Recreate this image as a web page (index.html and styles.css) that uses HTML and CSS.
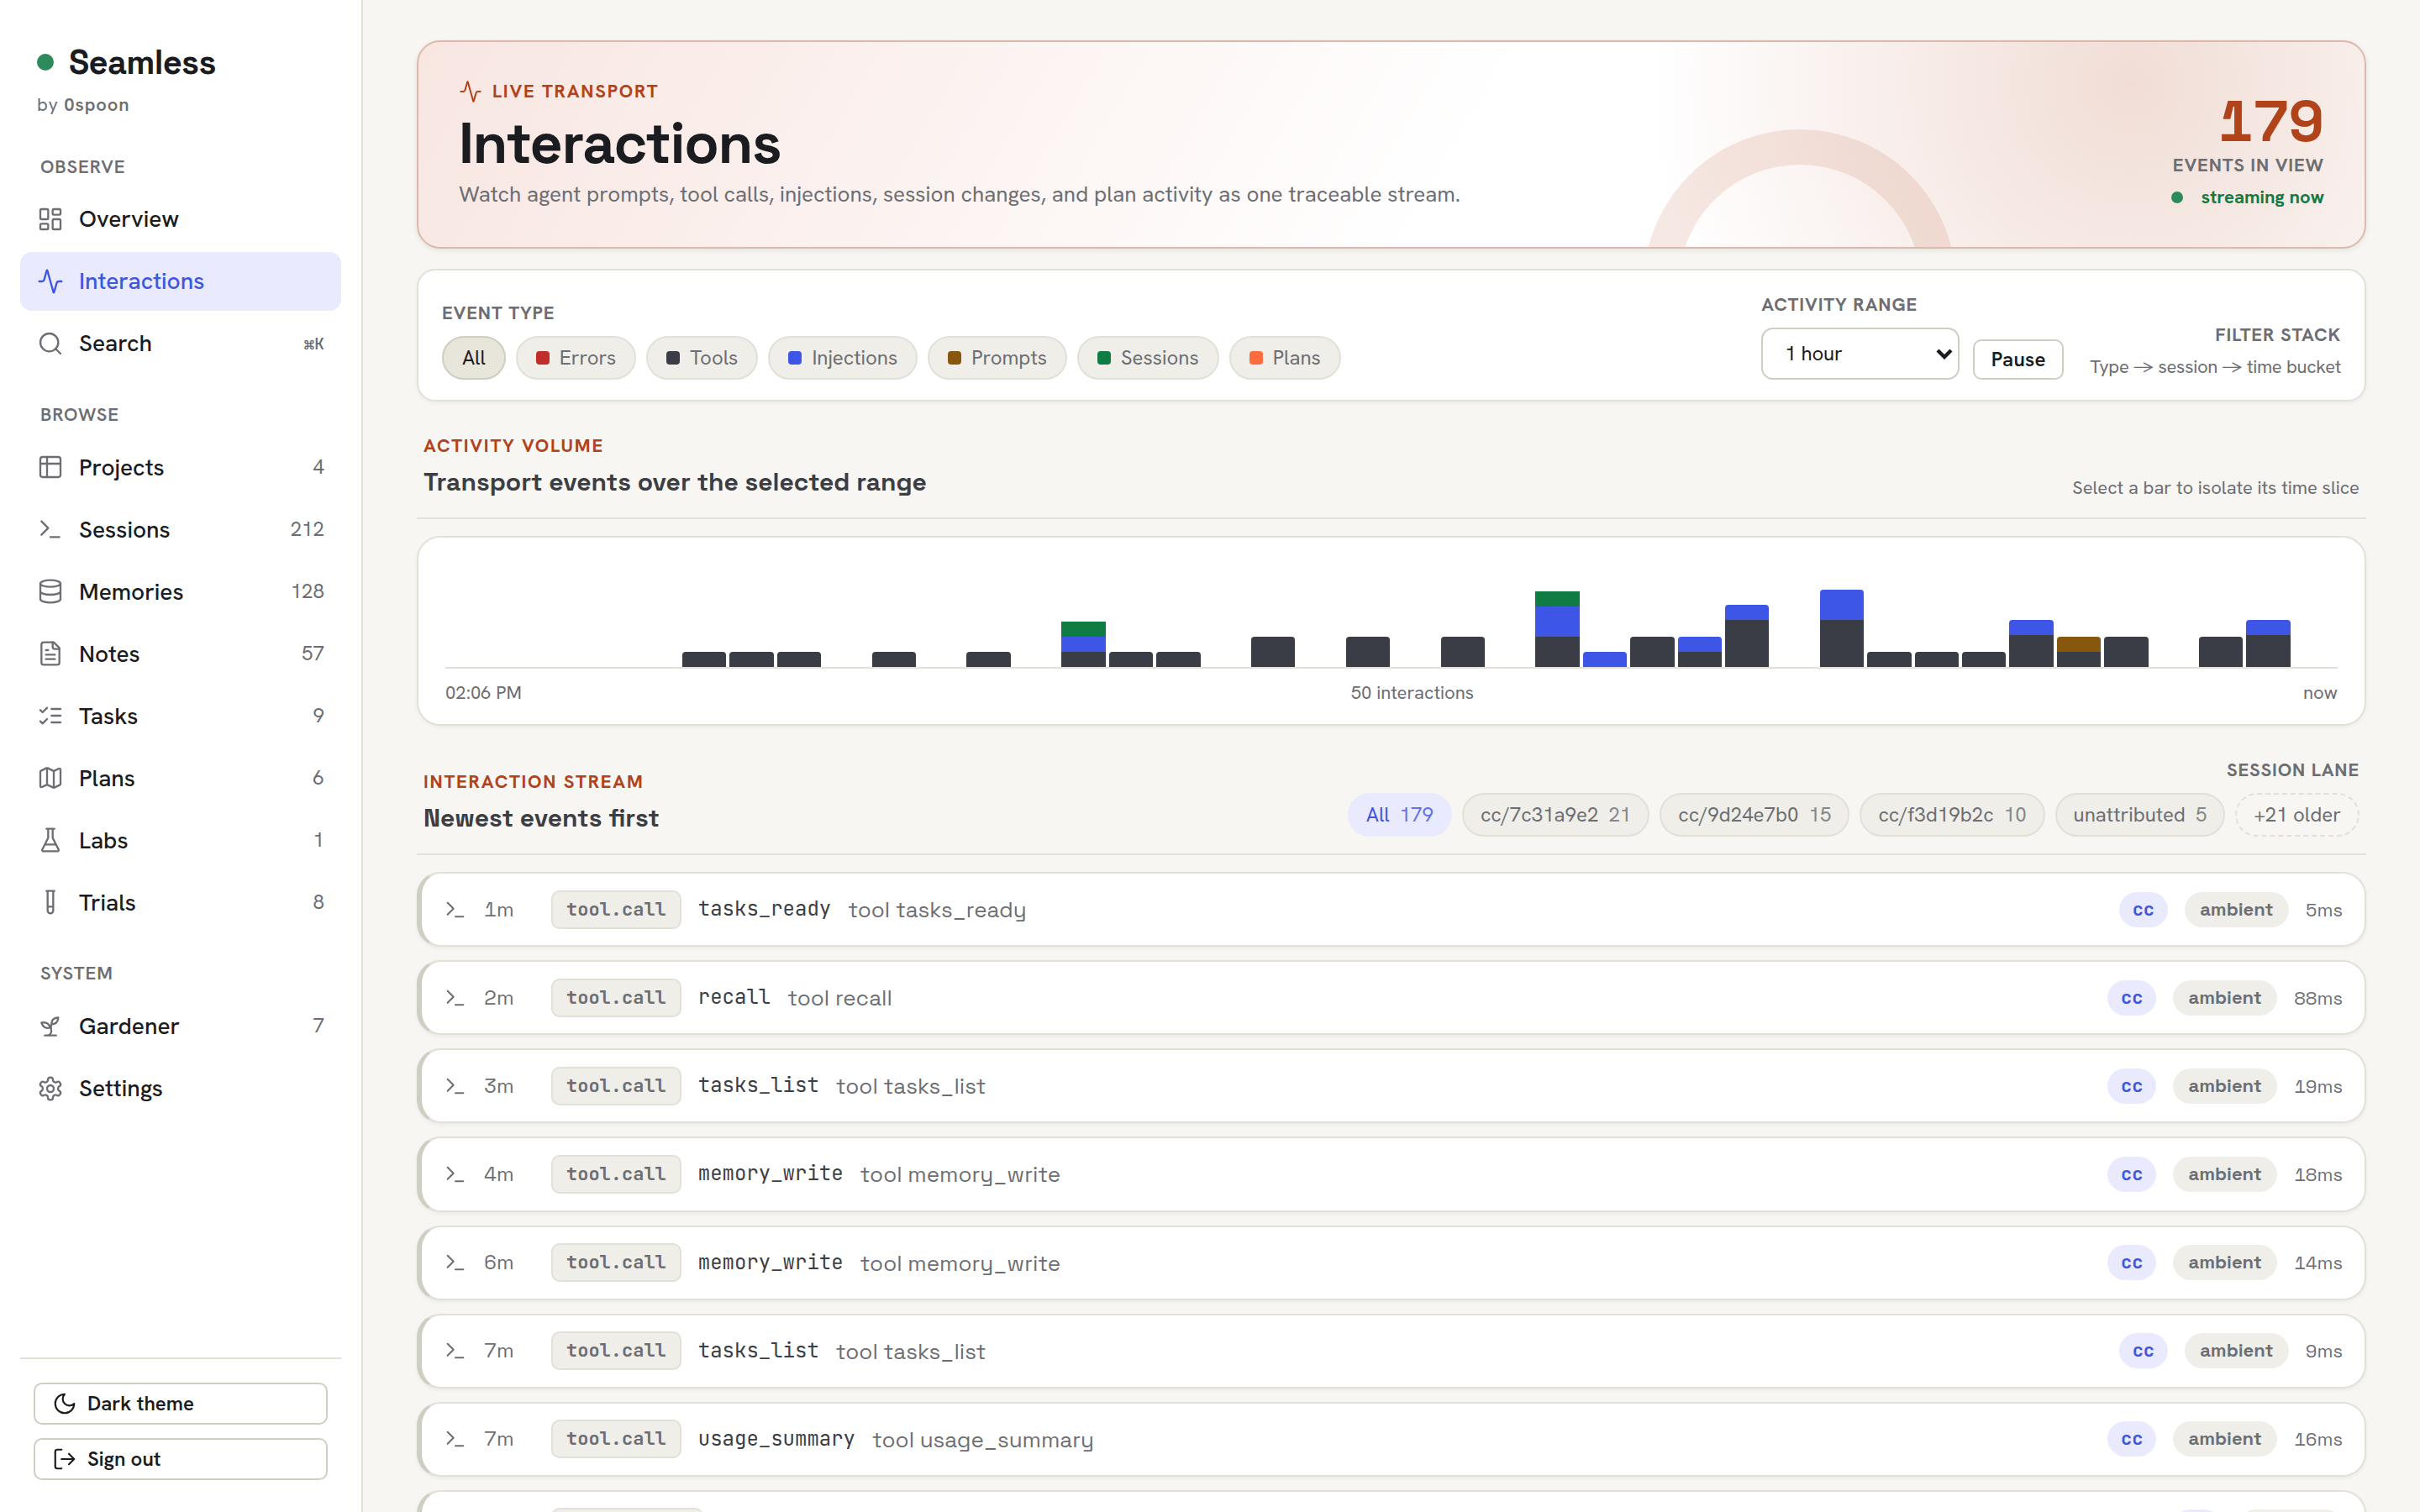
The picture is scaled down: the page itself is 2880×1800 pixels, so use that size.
FILE: index.html
```html
<!DOCTYPE html>
<html lang="en">
<head>
<meta charset="utf-8">
<title>Seamless · Interactions</title>
<link rel="stylesheet" href="styles.css">
</head>
<body>
<svg class="sprite" aria-hidden="true">
  <symbol id="i-grid" viewBox="0 0 24 24"><rect x="3" y="3" width="7" height="9" rx="1"/><rect x="14" y="3" width="7" height="5" rx="1"/><rect x="14" y="12" width="7" height="9" rx="1"/><rect x="3" y="16" width="7" height="5" rx="1"/></symbol>
  <symbol id="i-activity" viewBox="0 0 24 24"><path d="M22 12h-2.48a2 2 0 0 0-1.93 1.46l-2.35 8.36a.25.25 0 0 1-.48 0L9.24 2.18a.25.25 0 0 0-.48 0l-2.35 8.36A2 2 0 0 1 4.49 12H2"/></symbol>
  <symbol id="i-search" viewBox="0 0 24 24"><circle cx="11" cy="11" r="8"/><path d="m21 21-4.3-4.3"/></symbol>
  <symbol id="i-table" viewBox="0 0 24 24"><rect x="3" y="3" width="18" height="18" rx="2"/><path d="M3 9h18M9 3v18"/></symbol>
  <symbol id="i-term" viewBox="0 0 24 24"><path d="m4 17 6-6-6-6M12 19h8"/></symbol>
  <symbol id="i-db" viewBox="0 0 24 24"><ellipse cx="12" cy="5" rx="9" ry="3"/><path d="M3 5v14a9 3 0 0 0 18 0V5M3 12a9 3 0 0 0 18 0"/></symbol>
  <symbol id="i-file" viewBox="0 0 24 24"><path d="M15 2H6a2 2 0 0 0-2 2v16a2 2 0 0 0 2 2h12a2 2 0 0 0 2-2V7Z"/><path d="M14 2v4a2 2 0 0 0 2 2h4M10 9H8M16 13H8M16 17H8"/></symbol>
  <symbol id="i-tasks" viewBox="0 0 24 24"><path d="m3 17 2 2 4-4M3 7l2 2 4-4M13 6h8M13 12h8M13 18h8"/></symbol>
  <symbol id="i-map" viewBox="0 0 24 24"><path d="M14.1 5.55a2 2 0 0 0 1.8 0l3.65-1.83A1 1 0 0 1 21 4.62v12.76a1 1 0 0 1-.55.9l-4.55 2.27a2 2 0 0 1-1.8 0l-4.2-2.1a2 2 0 0 0-1.8 0l-3.65 1.83A1 1 0 0 1 3 19.38V6.62a1 1 0 0 1 .55-.9L8.1 3.45a2 2 0 0 1 1.8 0zM15 5.76v15M9 3.24v15"/></symbol>
  <symbol id="i-flask" viewBox="0 0 24 24"><path d="M10 2v7.53a2 2 0 0 1-.21.9L4.72 20.55A1 1 0 0 0 5.62 22h12.76a1 1 0 0 0 .9-1.45l-5.07-10.12a2 2 0 0 1-.21-.9V2M8.5 2h7M7 16h10"/></symbol>
  <symbol id="i-tube" viewBox="0 0 24 24"><path d="M14.5 2v17.500a2.500 2.500 0 0 1-5 0V2M8.500 2h7M14.500 16h-5"/></symbol>
  <symbol id="i-sprout" viewBox="0 0 24 24"><path d="M7 20h10M10 20c5.5-2.5.8-6.4 3-10"/><path d="M9.5 9.4c1.1.8 1.8 2.2 2.3 3.7-2 .4-3.5.4-4.8-.3-1.2-.6-2.3-1.9-3-4.2 2.8-.5 4.4 0 5.500.8zM14.1 6a7 7 0 0 0-1.1 4c1.900-.1 3.300-.6 4.300-1.400 1-1 1.600-2.300 1.700-4.600-2.700.1-4 1-4.900 2z"/></symbol>
  <symbol id="i-gear" viewBox="0 0 24 24"><path d="M12.220 2h-.44a2 2 0 0 0-2 2v.18a2 2 0 0 1-1 1.730l-.43.25a2 2 0 0 1-2 0l-.15-.08a2 2 0 0 0-2.730.730l-.22.38a2 2 0 0 0 .730 2.730l.15.1a2 2 0 0 1 1 1.720v.51a2 2 0 0 1-1 1.740l-.15.09a2 2 0 0 0-.730 2.730l.22.38a2 2 0 0 0 2.730.730l.15-.08a2 2 0 0 1 2 0l.43.25a2 2 0 0 1 1 1.730V20a2 2 0 0 0 2 2h.44a2 2 0 0 0 2-2v-.18a2 2 0 0 1 1-1.730l.43-.25a2 2 0 0 1 2 0l.15.08a2 2 0 0 0 2.730-.730l.22-.39a2 2 0 0 0-.730-2.730l-.15-.08a2 2 0 0 1-1-1.740v-.5a2 2 0 0 1 1-1.740l.15-.09a2 2 0 0 0 .730-2.730l-.22-.38a2 2 0 0 0-2.730-.730l-.15.08a2 2 0 0 1-2 0l-.43-.25a2 2 0 0 1-1-1.730V4a2 2 0 0 0-2-2z"/><circle cx="12" cy="12" r="3"/></symbol>
  <symbol id="i-moon" viewBox="0 0 24 24"><path d="M12 3a6 6 0 0 0 9 9 9 9 0 1 1-9-9Z"/></symbol>
  <symbol id="i-out" viewBox="0 0 24 24"><path d="M9 21H5a2 2 0 0 1-2-2V5a2 2 0 0 1 2-2h4M16 17l5-5-5-5M21 12H9"/></symbol>
</svg>
<div class="app">
  <aside class="sidebar">
    <div class="brand"><span class="brand-dot"></span><span class="brand-name">Seamless</span></div>
    <div class="byline">by <b>0spoon</b></div>
    <nav class="nav">
      <div class="nav-label first">OBSERVE</div>
      <a class="nav-item"><svg><use href="#i-grid"/></svg><span>Overview</span></a>
      <a class="nav-item active"><svg><use href="#i-activity"/></svg><span>Interactions</span></a>
      <a class="nav-item"><svg><use href="#i-search"/></svg><span>Search</span><kbd>⌘K</kbd></a>
      <div class="nav-label">BROWSE</div>
      <a class="nav-item"><svg><use href="#i-table"/></svg><span>Projects</span><i>4</i></a>
      <a class="nav-item"><svg><use href="#i-term"/></svg><span>Sessions</span><i>212</i></a>
      <a class="nav-item"><svg><use href="#i-db"/></svg><span>Memories</span><i>128</i></a>
      <a class="nav-item"><svg><use href="#i-file"/></svg><span>Notes</span><i>57</i></a>
      <a class="nav-item"><svg><use href="#i-tasks"/></svg><span>Tasks</span><i>9</i></a>
      <a class="nav-item"><svg><use href="#i-map"/></svg><span>Plans</span><i>6</i></a>
      <a class="nav-item"><svg><use href="#i-flask"/></svg><span>Labs</span><i>1</i></a>
      <a class="nav-item"><svg><use href="#i-tube"/></svg><span>Trials</span><i>8</i></a>
      <div class="nav-label">SYSTEM</div>
      <a class="nav-item"><svg><use href="#i-sprout"/></svg><span>Gardener</span><i>7</i></a>
      <a class="nav-item"><svg><use href="#i-gear"/></svg><span>Settings</span></a>
    </nav>
    <div class="side-foot">
      <button class="side-btn"><svg><use href="#i-moon"/></svg>Dark theme</button>
      <button class="side-btn"><svg><use href="#i-out"/></svg>Sign out</button>
    </div>
  </aside>

  <main class="main">
    <section class="hero">
      <div class="hero-ring"></div>
      <div class="hero-copy">
        <div class="eyebrow hero-eyebrow"><svg><use href="#i-activity"/></svg>LIVE TRANSPORT</div>
        <h1>Interactions</h1>
        <p>Watch agent prompts, tool calls, injections, session changes, and plan activity as one traceable stream.</p>
      </div>
      <div class="hero-stat">
        <strong>179</strong>
        <span class="caps">EVENTS IN VIEW</span>
        <span class="live"><span class="live-dot"></span>streaming now</span>
      </div>
    </section>

    <section class="toolbar">
      <div class="types">
        <div class="caps">EVENT TYPE</div>
        <div class="chips">
          <span class="chip on">All</span>
          <span class="chip"><em class="errors"></em>Errors</span>
          <span class="chip"><em class="tools"></em>Tools</span>
          <span class="chip"><em class="inject"></em>Injections</span>
          <span class="chip"><em class="prompts"></em>Prompts</span>
          <span class="chip"><em class="sess"></em>Sessions</span>
          <span class="chip"><em class="plans"></em>Plans</span>
        </div>
      </div>
      <div class="range">
        <div class="caps">ACTIVITY RANGE</div>
        <div class="select">1 hour<svg viewBox="0 0 20 14"><path d="M2 3l8 8 8-8"/></svg></div>
      </div>
      <button class="pause">Pause</button>
      <div class="stack">
        <div class="caps">FILTER STACK</div>
        <div class="hint">Type → session → time bucket</div>
      </div>
    </section>

    <header class="head">
      <div class="titles"><div class="eyebrow">ACTIVITY VOLUME</div><h2>Transport events over the selected range</h2></div>
      <div class="hint head-hint">Select a bar to isolate its time slice</div>
    </header>

    <section class="chart-card">
      <div class="chart">
        <div class="bar"></div><div class="bar"></div><div class="bar"></div><div class="bar"></div><div class="bar"></div>
        <div class="bar"><b class="tools" style="height:18px"></b></div>
        <div class="bar"><b class="tools" style="height:18px"></b></div>
        <div class="bar"><b class="tools" style="height:18px"></b></div>
        <div class="bar"></div>
        <div class="bar"><b class="tools" style="height:18px"></b></div>
        <div class="bar"></div>
        <div class="bar"><b class="tools" style="height:18px"></b></div>
        <div class="bar"></div>
        <div class="bar square"><b class="sess" style="height:18px"></b><b class="inject" style="height:18px"></b><b class="tools" style="height:18px"></b></div>
        <div class="bar"><b class="tools" style="height:18px"></b></div>
        <div class="bar"><b class="tools" style="height:18px"></b></div>
        <div class="bar"></div>
        <div class="bar"><b class="tools" style="height:36px"></b></div>
        <div class="bar"></div>
        <div class="bar"><b class="tools" style="height:36px"></b></div>
        <div class="bar"></div>
        <div class="bar"><b class="tools" style="height:36px"></b></div>
        <div class="bar"></div>
        <div class="bar square"><b class="sess" style="height:18px"></b><b class="inject" style="height:36px"></b><b class="tools" style="height:36px"></b></div>
        <div class="bar"><b class="inject" style="height:18px"></b></div>
        <div class="bar"><b class="tools" style="height:36px"></b></div>
        <div class="bar"><b class="inject" style="height:18px"></b><b class="tools" style="height:18px"></b></div>
        <div class="bar"><b class="inject" style="height:18px"></b><b class="tools" style="height:56px"></b></div>
        <div class="bar"></div>
        <div class="bar"><b class="inject" style="height:36px"></b><b class="tools" style="height:56px"></b></div>
        <div class="bar"><b class="tools" style="height:18px"></b></div>
        <div class="bar"><b class="tools" style="height:18px"></b></div>
        <div class="bar"><b class="tools" style="height:18px"></b></div>
        <div class="bar"><b class="inject" style="height:18px"></b><b class="tools" style="height:38px"></b></div>
        <div class="bar"><b class="prompts" style="height:18px"></b><b class="tools" style="height:18px"></b></div>
        <div class="bar"><b class="tools" style="height:36px"></b></div>
        <div class="bar"></div>
        <div class="bar"><b class="tools" style="height:36px"></b></div>
        <div class="bar"><b class="inject" style="height:18px"></b><b class="tools" style="height:38px"></b></div>
        <div class="bar"></div>
      </div>
      <div class="axis"><span>02:06 PM</span><span>50 interactions</span><span>now</span></div>
    </section>

    <header class="head">
      <div class="titles"><div class="eyebrow">INTERACTION STREAM</div><h2>Newest events first</h2></div>
      <div class="lanes">
        <div class="caps">SESSION LANE</div>
        <div class="chips">
          <span class="chip lane current">All<u>179</u></span>
          <span class="chip lane">cc/7c31a9e2<u>21</u></span>
          <span class="chip lane">cc/9d24e7b0<u>15</u></span>
          <span class="chip lane">cc/f3d19b2c<u>10</u></span>
          <span class="chip lane">unattributed<u>5</u></span>
          <span class="chip lane older">+21 older</span>
        </div>
      </div>
    </header>

    <section class="stream">
      <article class="row"><svg><use href="#i-term"/></svg><time>1m</time><code class="tag">tool.call</code><code class="name">tasks_ready</code><span class="desc">tool tasks_ready</span><span class="cc">cc</span><span class="ambient">ambient</span><span class="ms">5ms</span></article>
      <article class="row"><svg><use href="#i-term"/></svg><time>2m</time><code class="tag">tool.call</code><code class="name">recall</code><span class="desc">tool recall</span><span class="cc">cc</span><span class="ambient">ambient</span><span class="ms">88ms</span></article>
      <article class="row"><svg><use href="#i-term"/></svg><time>3m</time><code class="tag">tool.call</code><code class="name">tasks_list</code><span class="desc">tool tasks_list</span><span class="cc">cc</span><span class="ambient">ambient</span><span class="ms">19ms</span></article>
      <article class="row"><svg><use href="#i-term"/></svg><time>4m</time><code class="tag">tool.call</code><code class="name">memory_write</code><span class="desc">tool memory_write</span><span class="cc">cc</span><span class="ambient">ambient</span><span class="ms">18ms</span></article>
      <article class="row"><svg><use href="#i-term"/></svg><time>6m</time><code class="tag">tool.call</code><code class="name">memory_write</code><span class="desc">tool memory_write</span><span class="cc">cc</span><span class="ambient">ambient</span><span class="ms">14ms</span></article>
      <article class="row"><svg><use href="#i-term"/></svg><time>7m</time><code class="tag">tool.call</code><code class="name">tasks_list</code><span class="desc">tool tasks_list</span><span class="cc">cc</span><span class="ambient">ambient</span><span class="ms">9ms</span></article>
      <article class="row"><svg><use href="#i-term"/></svg><time>7m</time><code class="tag">tool.call</code><code class="name">usage_summary</code><span class="desc">tool usage_summary</span><span class="cc">cc</span><span class="ambient">ambient</span><span class="ms">16ms</span></article>
      <article class="row"><svg></svg><time></time><code class="tag wide"></code><span class="desc"></span><span class="cc"></span><span class="ambient"></span></article>
    </section>
  </main>
</div>
</body>
</html>
```
FILE: styles.css
```css
:root {
  --body: "Hanken Grotesk", "Open Sans", sans-serif;
  --display: "Space Grotesk", Inter, sans-serif;
  --mono: "JetBrains Mono", "DejaVu Sans Mono", monospace;
  --ink: #1b1c20;
  --ink-2: #3c3e46;
  --muted: #6d6e73;
  --line: #e2e1d8;
  --line-2: #cfcec3;
  --soft: #efeee9;
  --accent: #b1431b;
  --blue: #3f57dc;
  --blue-soft: #e9eafd;
}
* { box-sizing: border-box; }
body {
  margin: 0;
  height: 1800px;
  overflow: hidden;
  background: #f7f6f2;
  color: var(--ink);
  font: 400 24px/30px var(--body);
}
button { font: inherit; color: inherit; margin: 0; }
svg { fill: none; stroke: currentColor; stroke-width: 1.75; stroke-linecap: round; stroke-linejoin: round; flex: none; }
.sprite { display: none; }
.app { display: flex; height: 1800px; }

/* Sidebar */
.sidebar {
  width: 432px;
  flex: none;
  display: flex;
  flex-direction: column;
  padding: 50px 24px 38px;
  background: #fff;
  border-right: 2px solid var(--line);
}
.brand { display: flex; align-items: center; gap: 18px; height: 48px; padding-left: 20px; }
.brand-dot { width: 20px; height: 20px; border-radius: 50%; background: #2d8a5b; }
.brand-name { margin-top: 2px; font: 700 40px/48px var(--display); letter-spacing: -.7px; }
.byline { margin-top: 12px; padding-left: 20px; font-size: 22px; line-height: 30px; color: var(--muted); letter-spacing: .85px; }
.byline b { font-weight: 600; }
.nav { display: flex; flex-direction: column; gap: 4px; }
.nav-label {
  margin: 31px 0 9.5px;
  padding-left: 24px;
  font: 600 22px/29px var(--body);
  letter-spacing: .88px;
  color: var(--muted);
}
.nav-label.first { margin: 44px 0 8.5px; }
.nav-item {
  display: flex;
  align-items: center;
  height: 70px;
  padding: 0 20px;
  border-radius: 14px;
  font-size: 28px;
  font-weight: 500;
  line-height: 36px;
}
.nav-item span { margin: -1px auto 0 18px; }
.nav-item svg { width: 32px; height: 32px; color: var(--muted); }
.nav-item i { font-style: normal; font-weight: 400; font-size: 24px; color: var(--muted); margin-top: -1px; }
.nav-item kbd { font: 500 20px/30px var(--mono); color: var(--muted); }
.nav-item.active { background: var(--blue-soft); color: var(--blue); }
.nav-item.active svg { color: inherit; }
.side-foot {
  margin-top: auto;
  display: flex;
  flex-direction: column;
  gap: 16px;
  padding: 28px 16px 0;
  border-top: 2px solid var(--line);
}
.side-btn {
  display: flex;
  align-items: center;
  gap: 12px;
  height: 50px;
  padding: 0 20px 1px;
  border: 2px solid var(--line-2);
  border-radius: 10px;
  background: #fff;
  font-weight: 600;
}
.side-btn svg { width: 30px; height: 30px; }

/* Main column */
.main { flex: 1; min-width: 0; padding: 48px 64px 0; }
.caps { font: 700 22px/29px var(--body); letter-spacing: .88px; color: var(--muted); }
.eyebrow { font: 700 22px/29px var(--body); letter-spacing: 1.76px; color: var(--accent); }
.hint { font-size: 22px; line-height: 29px; color: var(--muted); }

.hero {
  position: relative;
  display: flex;
  justify-content: space-between;
  align-items: flex-end;
  height: 248px;
  padding: 0 48px 45px;
  overflow: hidden;
  border: 2px solid #dcb9ac;
  border-radius: 28px;
  background:
    radial-gradient(circle at 88% 20%, rgba(177, 67, 27, .18), rgba(177, 67, 27, 0) 28%),
    linear-gradient(120deg, #f8e6e1 0%, #fff 54%);
  box-shadow: 0 2px 6px rgba(40, 30, 20, .09);
}
.hero-ring {
  position: absolute;
  right: 486px;
  top: 104px;
  width: 372px;
  height: 372px;
  border: 42px solid rgba(177, 67, 27, .12);
  border-radius: 50%;
}
.hero-copy, .hero-stat { position: relative; display: flex; flex-direction: column; }
.hero-eyebrow { display: flex; align-items: center; gap: 12px; }
.hero-eyebrow svg { width: 28px; height: 28px; }
h1 { margin: 12px 0 6px; font: 700 68px/72px var(--display); letter-spacing: -1.36px; }
.hero p { margin: 0; font-size: 26px; line-height: 36px; color: var(--muted); }
.hero-stat { align-items: flex-end; }
.hero-stat strong { font: 700 68px/68px var(--display); font-feature-settings: "tnum"; color: var(--accent); }
.hero-stat .caps { margin-top: 3px; }
.live { display: flex; align-items: center; margin-top: 9px; font-size: 22px; line-height: 29px; font-weight: 700; color: #157a43; }
.live-dot { width: 14px; height: 14px; margin-right: 22px; border-radius: 50%; background: #2d8a5b; }

.toolbar {
  display: flex;
  align-items: flex-end;
  height: 158px;
  margin-top: 24px;
  padding: 0 28px 24px;
  border: 2px solid var(--line);
  border-radius: 22px;
  background: #fff;
  box-shadow: 0 2px 4px rgba(40, 40, 30, .05);
}
.types { margin-right: auto; }
.chips { display: flex; gap: 12px; margin-top: 13px; }
.chip {
  display: flex;
  align-items: center;
  height: 52px;
  padding: 0 22px;
  border: 2px solid var(--line);
  border-radius: 26px;
  background: var(--soft);
  color: var(--muted);
  white-space: nowrap;
}
.chip em { width: 16px; height: 16px; margin-right: 12px; border-radius: 4px; }
.chip.on { background: #e8e5db; border-color: var(--line-2); color: var(--ink); }
.tools { background: #3b3d46; }
.errors { background: #c12e29; }
.inject { background: #3e56e6; }
.prompts { background: #87570e; }
.sess { background: #0f7c43; }
.plans { background: #ff6b3d; }

.range { width: 236px; margin-right: 16px; }
.select {
  display: flex;
  align-items: center;
  justify-content: space-between;
  height: 62px;
  margin-top: 13px;
  padding: 0 6px 0 26px;
  border: 2px solid var(--line-2);
  border-radius: 14px;
  letter-spacing: -.2px;
}
.select svg { width: 20px; height: 14px; stroke-width: 4.4; stroke-linecap: butt; stroke-linejoin: miter; }
.pause {
  width: 108px;
  height: 48px;
  margin-right: 31px;
  padding: 0;
  border: 2px solid var(--line-2);
  border-radius: 10px;
  background: #fff;
  font-weight: 600;
  letter-spacing: .2px;
}
.stack { text-align: right; }
.stack .hint { margin: 9px 0 1px; letter-spacing: -.29px; }

.head {
  display: flex;
  justify-content: space-between;
  align-items: flex-end;
  margin-top: 38px;
  padding: 0 8px 20px;
  border-bottom: 2px solid #e1e0da;
}
.titles { padding-bottom: 2px; }
h2 { margin: 9px 0 0; font: 700 30px/40px var(--display); color: var(--ink-2); }
.head-hint { padding-bottom: 1px; }

.chart-card {
  height: 226px;
  margin-top: 20px;
  padding: 30px 32px 0;
  border: 2px solid var(--line);
  border-radius: 28px;
  background: #fff;
  box-shadow: 0 2px 4px rgba(40, 40, 30, .05);
}
.chart { display: flex; align-items: flex-end; gap: 4px; height: 126px; border-bottom: 2px solid var(--line); }
.bar { flex: 1; display: flex; flex-direction: column; border-radius: 4px 4px 0 0; overflow: hidden; }
.bar.square { border-radius: 0; }
.axis { display: flex; justify-content: space-between; margin-top: 14px; font-size: 22px; line-height: 29px; color: var(--muted); }

.lanes { text-align: right; }
.lane { gap: 12px; padding: 0 20px; }
.lane u { text-decoration: none; opacity: .8; font-feature-settings: "tnum"; }
.lane.current { background: var(--blue-soft); border-color: var(--blue-soft); color: var(--blue); }
.lane.older { background: none; border-style: dashed; }

.stream { display: flex; flex-direction: column; gap: 16px; margin-top: 20px; }
.row {
  display: flex;
  align-items: center;
  height: 89.14px;
  padding: 0 26px;
  border: 2px solid var(--line);
  border-left: 6px solid var(--line-2);
  border-radius: 28px;
  background: #fff;
  box-shadow: 0 2px 4px rgba(40, 40, 30, .06);
}
.row svg { width: 28px; height: 28px; color: var(--muted); }
.row time { width: 80px; margin-left: 20px; font: 400 24px/30px var(--display); font-feature-settings: "tnum"; color: var(--muted); }
.tag {
  height: 46px;
  width: 154.8px;
  border: 2px solid var(--line);
  border-radius: 10px;
  background: var(--soft);
  font: 600 22px/41px var(--mono);
  text-align: center;
  color: var(--muted);
}
.tag.wide { width: 181px; }
.name { margin: -1px 0 0 20px; font: 400 24px/30px var(--mono); color: var(--ink-2); }
.desc { margin: 1px auto 0 20px; font: 400 26px/32px var(--display); color: var(--muted); }
.cc, .ambient { height: 42px; border-radius: 21px; text-align: center; }
.cc { width: 58px; background: var(--blue-soft); color: var(--blue); font: 600 22px/42px var(--mono); }
.ambient { width: 124px; margin-left: 20px; background: var(--soft); color: var(--muted); font: 600 22px/41px var(--display); }
.ms { margin-left: 20px; font: 400 22px/30px var(--display); font-feature-settings: "tnum"; color: var(--muted); }
```
